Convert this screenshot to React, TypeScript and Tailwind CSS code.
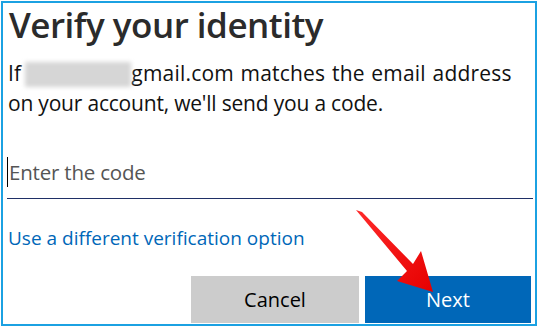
export default function App() {
  return (
    <div className="w-[538px] h-[327px] bg-white p-px">
      <div
        className="relative w-[536px] h-[325px] border-2 border-[#1ba1e2] overflow-hidden"
        style={{ fontFamily: '"Open Sans", "Noto Sans", sans-serif' }}
      >
        <div className="pl-[4px] pr-[2px] flex flex-col h-full">
          {/* Title */}
          <h1 className="text-[35px] leading-[44px] font-semibold text-[#2b2b2b] pl-[2px] tracking-[-0.5px]">
            Verify your identity
          </h1>

          {/* Message */}
          <p className="mt-[11px] text-[21px] leading-[30px] text-[#111] pl-[1px] whitespace-nowrap">
            <span className="tracking-[0.2px] [word-spacing:1px]">
              If
              <span className="inline-block ml-[4px] align-[-6px] w-[106px] h-[25px] bg-[#d6d6d6] blur-[2px]" />
              gmail.com matches the email address
            </span>
            <br />
            <span className="tracking-[-0.2px]">on your account, we'll send you a code.</span>
          </p>

          {/* Code input */}
          <div className="mt-[28px] border-b border-[#1f2f66] h-[53px] flex items-center">
            <span className="w-px h-[30px] bg-black" />
            <span className="pl-[1px] text-[20.5px] text-[#555] tracking-[-0.2px]">
              Enter the code
            </span>
          </div>

          {/* Alternate option link */}
          <a className="mt-[27px] text-[19px] leading-[24px] text-[#0067b8] pl-[1px]">
            Use a different verification option
          </a>

          {/* Buttons */}
          <div className="mt-auto mb-[1px] flex justify-end gap-[6px] pr-[2px]">
            <button className="w-[168px] h-[47px] bg-[#cccccc] text-[20px] text-black">
              Cancel
            </button>
            <button className="w-[166px] h-[47px] bg-[#0067b8] text-[20px] text-white">
              Next
            </button>
          </div>
        </div>

        {/* Red pointer arrow */}
        <svg
          className="absolute left-0 top-0 pointer-events-none"
          width="536"
          height="325"
          viewBox="1 1 536 325"
        >
          <defs>
            <linearGradient id="arrowFill" x1="0" y1="0" x2="1" y2="1">
              <stop offset="0" stopColor="#ff2a2a" />
              <stop offset="1" stopColor="#e60000" />
            </linearGradient>
          </defs>
          <polygon
            points="354,208 360,210 411,262 419,249 431,290 395,279 405,269"
            fill="url(#arrowFill)"
          />
        </svg>
      </div>
    </div>
  );
}
